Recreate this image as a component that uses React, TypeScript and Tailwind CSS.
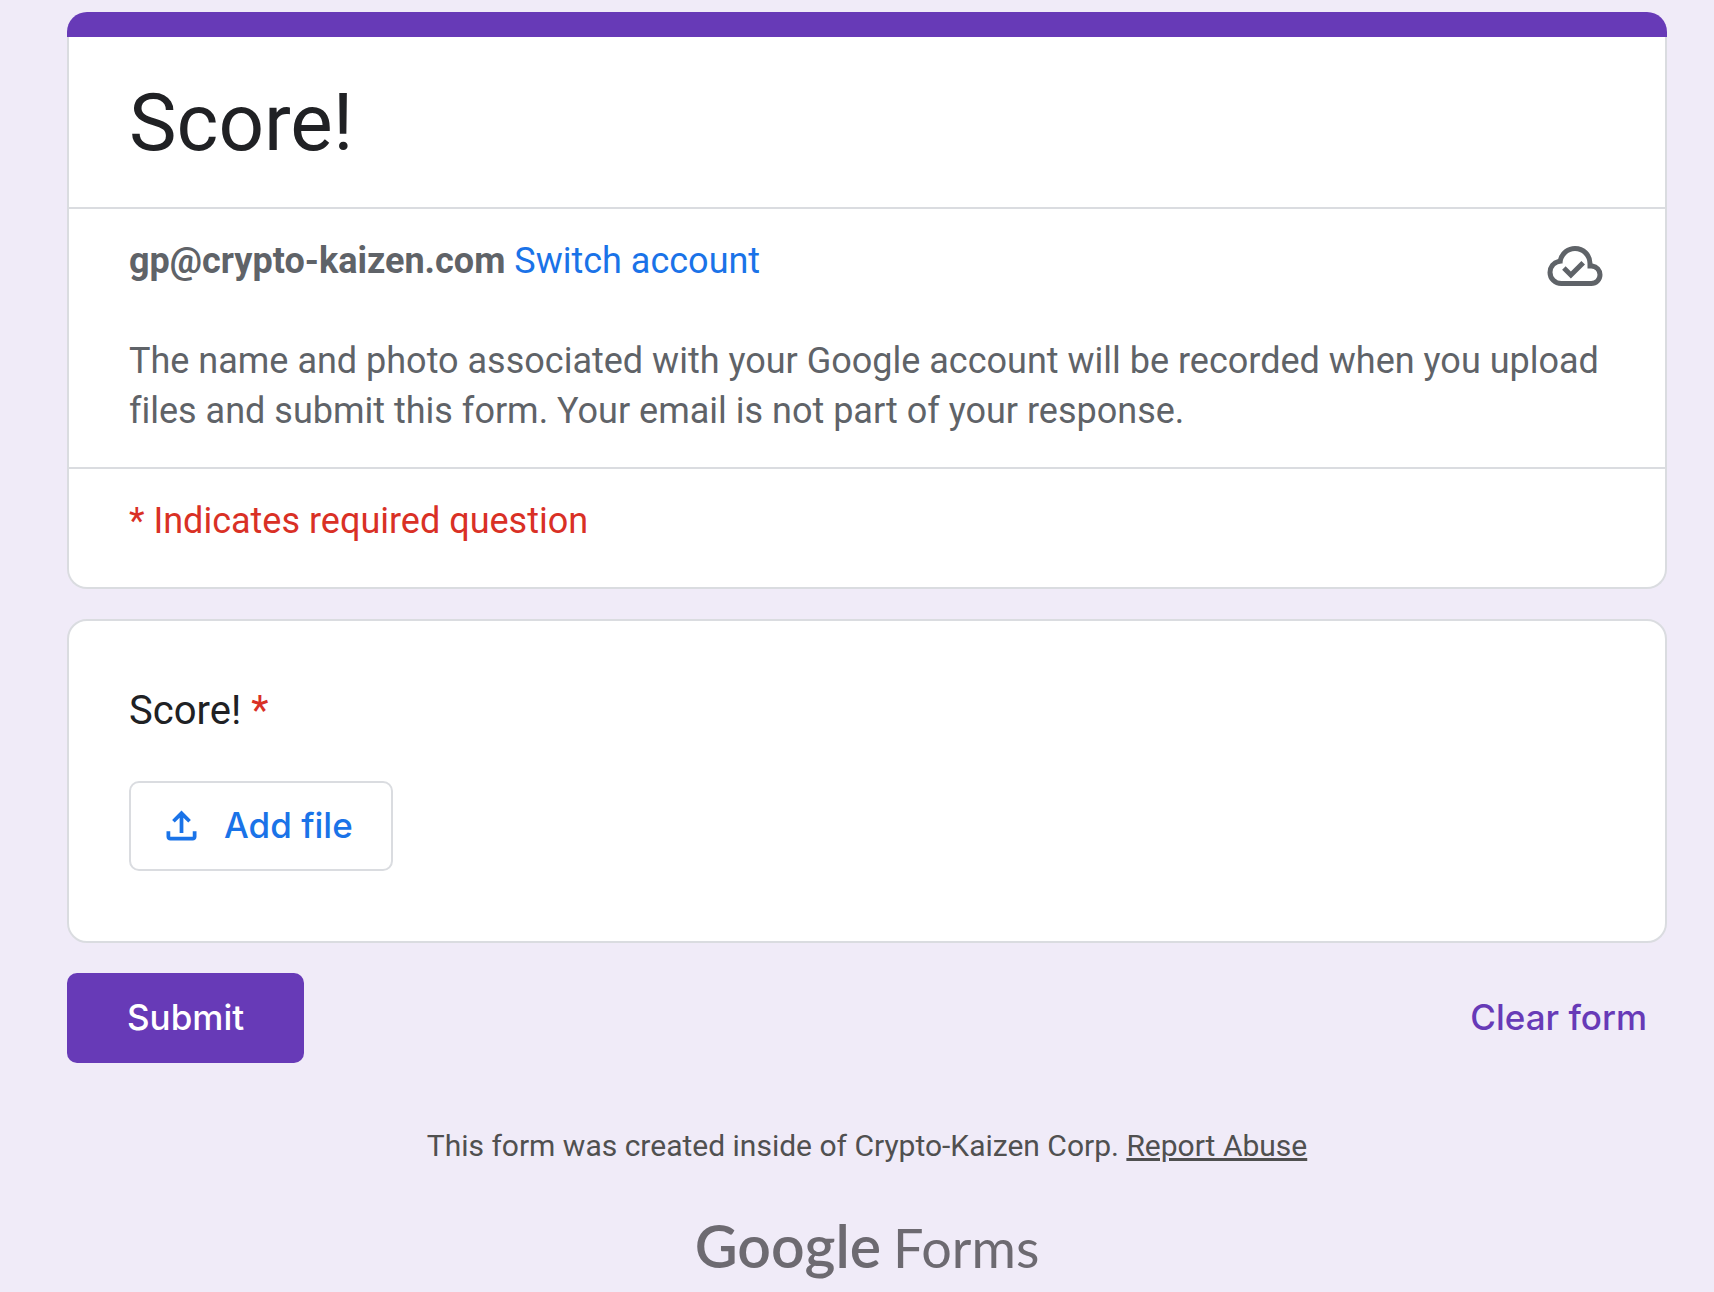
function CloudDoneIcon() {
  return (
    <svg className="size-[60px] shrink-0" viewBox="0 -960 960 960" fill="currentColor" role="img" aria-label="Draft saved">
      <path d="M414-280l226-226-58-56-168 168-84-84-56 56 140 142ZM260-160q-91 0-155.5-63T40-377q0-78 47-139t123-78q25-92 100-149t170-57q117 0 198.5 81.5T760-520q69 8 114.5 59.5T920-340q0 75-52.5 127.5T740-160H260Zm0-80h480q42 0 71-29t29-71q0-42-29-71t-71-29h-60v-80q0-83-58.5-141.5T480-720q-83 0-141.5 58.5T280-520h-20q-58 0-99 41t-41 99q0 58 41 99t99 41Z" />
    </svg>
  );
}

function UploadIcon() {
  return (
    <svg className="size-[45px] shrink-0" viewBox="0 -960 960 960" fill="currentColor" aria-hidden="true">
      <path d="M440-320v-326L336-542l-56-58 200-200 200 200-56 58-104-104v326h-80ZM240-160q-33 0-56.5-23.5T160-240v-120h80v120h480v-120h80v120q0 33-23.5 56.5T720-160H240Z" />
    </svg>
  );
}

function HeaderCard() {
  return (
    <header>
      <div className="h-[25px] rounded-t-[20px] bg-[#673ab7]" />
      <div className="divide-y-2 divide-[#dadce0] rounded-b-[20px] border-2 border-t-0 border-[#dadce0] bg-white">
        <div className="px-[60px] pt-9 pb-[34px]">
          <h1 className="text-[80px] leading-[100px] text-[#202124]">Score!</h1>
        </div>
        <div className="px-[60px] pt-[27px] pb-[31px] text-[36px] leading-[50px] text-[#5f6368]">
          <div className="flex h-[50px] items-start justify-between">
            <p>
              <strong className="font-bold">gp@crypto-kaizen.com</strong>{' '}
              <a href="#switch" className="text-[#1a73e8]">Switch account</a>
            </p>
            <CloudDoneIcon />
          </div>
          <p className="mt-[50px]">
            The name and photo associated with your Google account will be recorded when you upload files and submit
            this form. Your email is not part of your response.
          </p>
        </div>
        <p className="px-[60px] pt-[27px] pb-[41px] text-[36px] leading-[50px] text-[#d93025]">* Indicates required question</p>
      </div>
    </header>
  );
}

function QuestionCard() {
  return (
    <section className="mt-[30px] rounded-[20px] border-2 border-[#dadce0] bg-white px-[60px] pt-[60px] pb-[70px]">
      <h2 id="question" className="text-[40px] leading-[60px] text-[#202124]">
        Score! <span className="text-[#d93025]">*</span>
      </h2>
      <button
        type="button"
        aria-describedby="question"
        className="mt-10 flex h-[90px] items-center gap-5 rounded-[10px] border-2 border-[#dadce0] pr-[38px] pb-0.5 pl-7 font-[Inter] text-[35px] font-medium text-[#1a73e8]"
      >
        <UploadIcon />
        Add file
      </button>
    </section>
  );
}

export default function App() {
  return (
    <div className="min-h-screen bg-[#f0ebf8] pt-3 pr-[47px] pl-[67px] font-[Roboto,sans-serif] [font-variant-ligatures:none]">
      <main>
        <form onSubmit={(e) => e.preventDefault()}>
          <HeaderCard />
          <QuestionCard />
          <div className="mt-[30px] flex items-center justify-between font-[Inter] text-[35px] font-medium">
            <button type="submit" className="h-[90px] rounded-[10px] bg-[#673ab7] px-[60px] pb-0.5 text-white">
              Submit
            </button>
            <button type="reset" className="h-[90px] px-5 pb-0.5 text-[#673ab7]">
              Clear form
            </button>
          </div>
        </form>
      </main>
      <footer className="mt-[63px] text-center text-[#505050]">
        <p className="text-[30px] leading-10">
          This form was created inside of Crypto-Kaizen Corp.{' '}
          <a href="#report" className="underline">Report Abuse</a>
        </p>
        <a href="#forms" className="mt-11 flex items-baseline justify-center gap-3 font-[Lato] leading-[72px] text-[#6d6a71]">
          <span className="text-[59px] font-semibold">Google</span>
          <span className="text-[54px]">Forms</span>
        </a>
      </footer>
    </div>
  );
}
